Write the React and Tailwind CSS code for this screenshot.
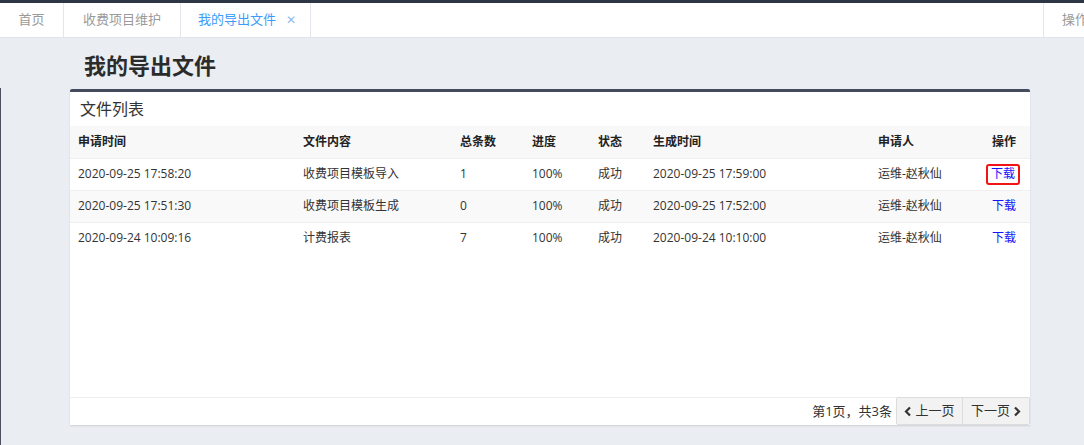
import React from "react";

const cols = [
  { t: "申请时间", w: "w-[225px]" },
  { t: "文件内容", w: "w-[157px]" },
  { t: "总条数", w: "w-[72px]" },
  { t: "进度", w: "w-[66px]" },
  { t: "状态", w: "w-[55px]" },
  { t: "生成时间", w: "w-[225px]" },
  { t: "申请人", w: "w-[114px]" },
  { t: "操作", w: "" },
];

const rows = [
  ["2020-09-25 17:58:20", "收费项目模板导入", "1", "100%", "成功", "2020-09-25 17:59:00", "运维-赵秋仙"],
  ["2020-09-25 17:51:30", "收费项目模板生成", "0", "100%", "成功", "2020-09-25 17:52:00", "运维-赵秋仙"],
  ["2020-09-24 10:09:16", "计费报表", "7", "100%", "成功", "2020-09-24 10:10:00", "运维-赵秋仙"],
];

export default function App() {
  return (
    <div
      className="w-[1084px] h-[445px] bg-[#eaedf1] overflow-hidden flex flex-col relative"
      style={{ fontFamily: '"Open Sans", "Noto Sans CJK SC", sans-serif' }}
    >
      <div className="h-[3px] bg-[#2e3545] shrink-0" />
      <div className="h-[35px] bg-white border-b border-[#dfe3ea] flex shrink-0 text-[13px]">
        <div className="w-[64px] flex items-center justify-center text-[#9a9a9a] border-r border-[#e3e6eb]">首页</div>
        <div className="w-[117px] flex items-center justify-center text-[#9a9a9a] border-r border-[#e3e6eb]">收费项目维护</div>
        <div className="w-[130px] flex items-center justify-center text-[#3d9bfa] border-r border-[#e3e6eb] gap-[10px] pl-[3px]">
          <span>我的导出文件</span>
          <span className="text-[12px] text-[#8fbcf0] leading-none">✕</span>
        </div>
        <div className="flex-1" />
        <div className="w-[41px] border-l border-[#e3e6eb] flex items-center pl-[18px] text-[#9a9a9a] whitespace-nowrap overflow-hidden">操作</div>
      </div>
      <div className="absolute left-0 top-[88px] bottom-0 w-[1px] bg-[#4a5060]" />
      <div className="flex-1 flex flex-col pl-[70px] pr-[54px]">
        <div className="h-[51px] flex items-center pl-[14px] pt-[3px] text-[22px] font-bold text-[#2b2b2b]">我的导出文件</div>
        <div className="bg-white border-t-[3px] border-[#434b5c] rounded-t-[2px] shadow-[0_1px_2px_rgba(0,0,0,0.12)] flex flex-col h-[336px]">
          <div className="h-[34px] flex items-center pl-[10px] text-[16px] text-[#333]">文件列表</div>
          <div className="flex-1">
            <table className="w-full table-fixed border-collapse text-[12px] text-[#333]">
              <thead>
                <tr className="bg-[#f8f8f8] h-[32px]">
                  {cols.map((c) => (
                    <th key={c.t} className={`${c.w} text-left font-bold pl-[8px] text-[#222]`}>{c.t}</th>
                  ))}
                </tr>
              </thead>
              <tbody>
                {rows.map((r, i) => (
                  <tr key={i} className={`h-[32px] border-t border-[#efefef] ${i === 1 ? "bg-[#f9f9f9]" : "bg-white"}`}>
                    {r.map((v, j) => (
                      <td key={j} className="pl-[8px] whitespace-nowrap">{v}</td>
                    ))}
                    <td className="pl-[8px]">
                      {i === 0 ? (
                        <span className="inline-flex items-center border-2 border-[#f01414] rounded-[3px] px-[3px] ml-[-6px] h-[21px] text-[#1414ff]">下载</span>
                      ) : (
                        <span className="text-[#1414ff]">下载</span>
                      )}
                    </td>
                  </tr>
                ))}
              </tbody>
            </table>
          </div>
          <div className="h-[28px] border-t border-[#eeeeee] flex items-stretch justify-end text-[13px] text-[#333]">
            <div className="flex items-center pr-[4px]">第1页，共3条</div>
            <div className="flex border border-[#dcdcdc] rounded-[2px] mt-[-1px]">
              <div className="w-[66px] bg-[#f2f2f2] flex items-center justify-center gap-[3px] border-r border-[#dcdcdc]">
                <svg width="8" height="11" viewBox="0 0 8 11"><path d="M6 1.5 L2 5.5 L6 9.5" stroke="#333" strokeWidth="2.2" fill="none" /></svg>
                <span>上一页</span>
              </div>
              <div className="w-[66px] bg-[#f2f2f2] flex items-center justify-center gap-[3px]">
                <span>下一页</span>
                <svg width="8" height="11" viewBox="0 0 8 11"><path d="M2 1.5 L6 5.5 L2 9.5" stroke="#333" strokeWidth="2.2" fill="none" /></svg>
              </div>
            </div>
          </div>
        </div>
      </div>
    </div>
  );
}
